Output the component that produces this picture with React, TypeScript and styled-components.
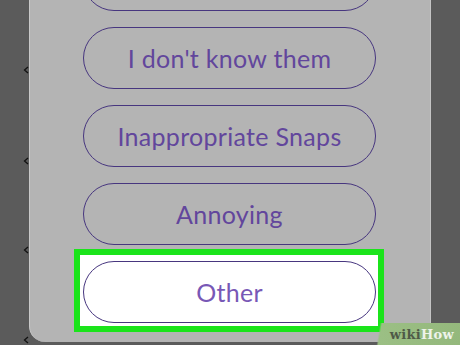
import React from "react";
import styled, { createGlobalStyle } from "styled-components";

const Global = createGlobalStyle`
  html, body { margin: 0; padding: 0; background: #5b5b5b; }
  body { width: 460px; height: 345px; overflow: hidden; font-family: "Lato", "Noto Sans", sans-serif; }
`;

const Stage = styled.div`
  position: relative;
  display: flex;
  width: 460px;
  height: 345px;
  overflow: hidden;
  background: #5b5b5b;
`;

const Strip = styled.div`
  position: relative;
  width: 29px;
  flex: none;
`;

const Chevron = styled.span<{ $top: number }>`
  position: absolute;
  right: 0;
  top: ${(p) => p.$top}px;
  width: 6px;
  height: 8px;
`;

const Panel = styled.div`
  width: 402px;
  height: 342px;
  flex: none;
  background: #b4b4b4;
  border-left: 1px solid #c9c9c9;
  border-right: 1px solid #c4c4c4;
  box-sizing: border-box;
  border-radius: 0 0 16px 16px;
  overflow: hidden;
  padding-left: 53px;
`;

const List = styled.div`
  display: flex;
  flex-direction: column;
  gap: 16px;
  margin-top: -51px;
`;

const Option = styled.div<{ $selected?: boolean }>`
  position: relative;
  z-index: 1;
  width: 293px;
  height: 62px;
  box-sizing: border-box;
  border: 1.6px solid #47367f;
  border-radius: 31px;
  display: flex;
  align-items: center;
  justify-content: center;
  font-size: 25px;
  letter-spacing: 0.3px;
  color: ${(p) => (p.$selected ? "#7858b6" : "#62469c")};
  background: ${(p) => (p.$selected ? "#ffffff" : "transparent")};
`;

const Highlight = styled.div`
  position: relative;
  width: 293px;
  height: 62px;
  &::before {
    content: "";
    position: absolute;
    top: -12px;
    left: -9px;
    right: -8px;
    bottom: -9px;
    border: 6px solid #1be41b;
    background: #ffffff;
    box-sizing: border-box;
  }
`;

const Watermark = styled.div`
  position: absolute;
  right: 0;
  bottom: 0;
  width: 88px;
  height: 22px;
  display: flex;
  align-items: center;
  justify-content: flex-end;
  padding-right: 6px;
  box-sizing: border-box;
  background: linear-gradient(100deg, rgba(150,190,120,0) 0px, rgba(150,190,120,0) 8px, #9bbf84 10px, #94b87c 100%);
  font-family: "DejaVu Serif", "Liberation Serif", serif;
  font-weight: bold;
  font-size: 13px;
  letter-spacing: 0.3px;
`;

const Wiki = styled.span`
  color: #4f5a47;
`;

const How = styled.span`
  color: #eef3ea;
`;

const ChevronIcon = () => (
  <svg width="6" height="8" viewBox="0 0 6 8">
    <path d="M5 1 L1.5 4 L5 7" fill="none" stroke="#111" strokeWidth="1.3" />
  </svg>
);

const options = ["", "I don't know them", "Inappropriate Snaps", "Annoying"];

export default function App() {
  return (
    <Stage>
      <Global />
      <Strip>
        {[58, 149, 238, 328].map((t) => (
          <Chevron key={t} $top={t}>
            <ChevronIcon />
          </Chevron>
        ))}
      </Strip>
      <Panel>
        <List>
          {options.map((o, i) => (
            <Option key={i}>{o}</Option>
          ))}
          <Highlight>
            <Option $selected>Other</Option>
          </Highlight>
        </List>
      </Panel>
      <Strip />
      <Watermark>
        <Wiki>wiki</Wiki>
        <How>How</How>
      </Watermark>
    </Stage>
  );
}
